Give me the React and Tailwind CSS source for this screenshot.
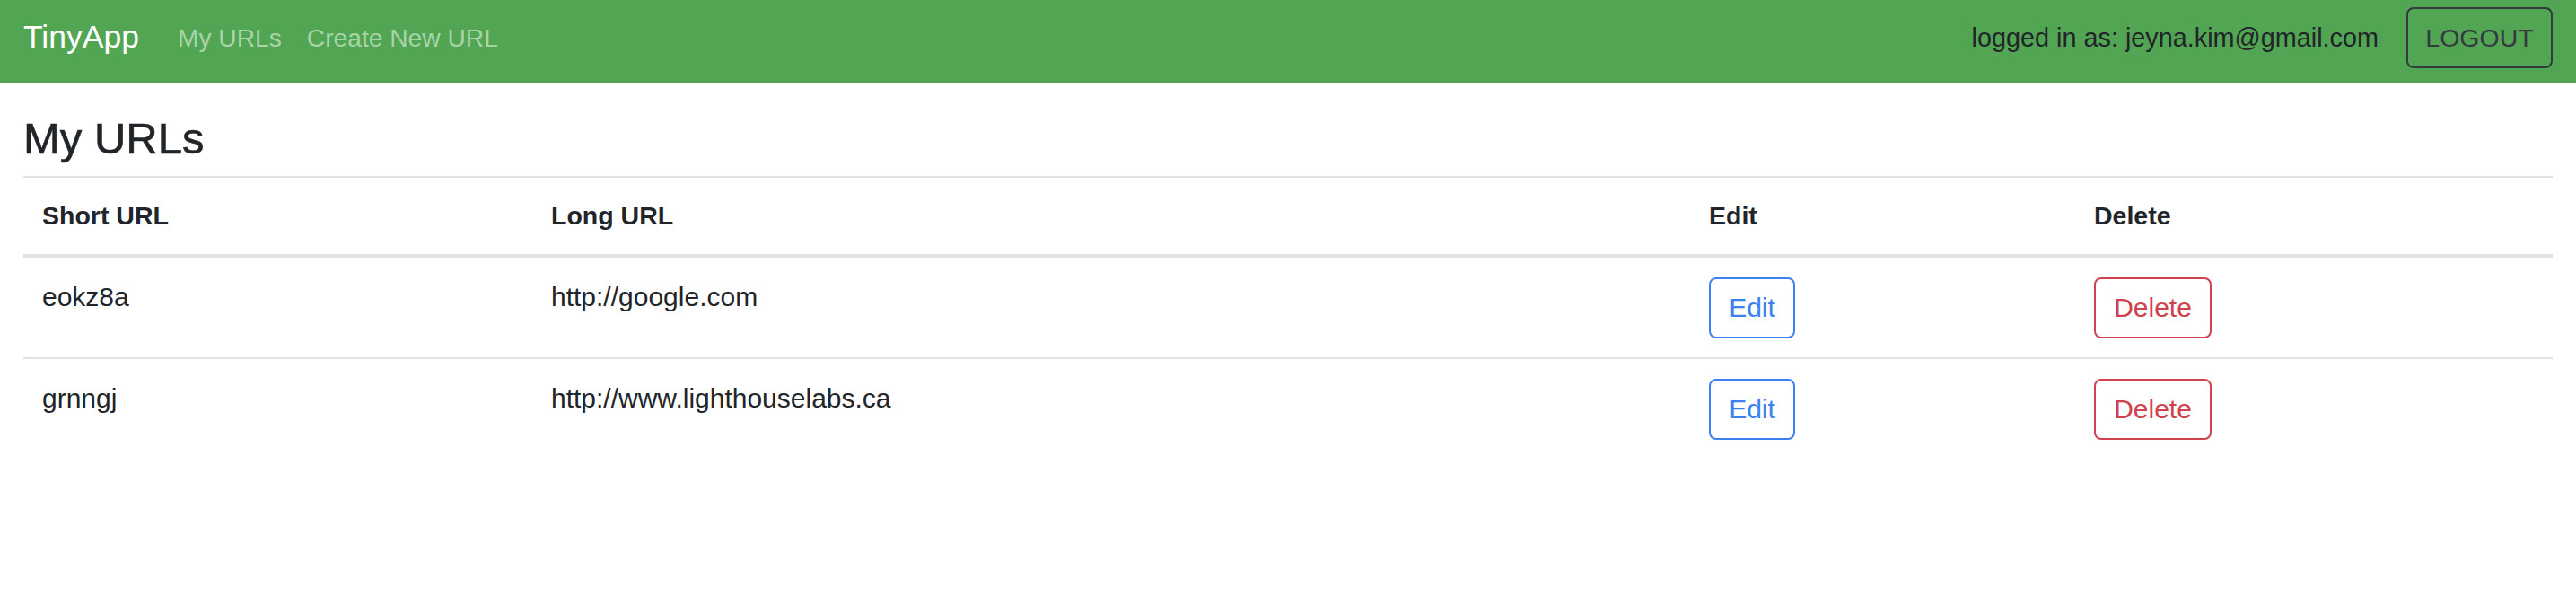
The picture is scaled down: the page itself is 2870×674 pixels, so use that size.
const urls = [
  { short: 'eokz8a', long: 'http://google.com' },
  { short: 'grnngj', long: 'http://www.lighthouselabs.ca' },
]

export default function App() {
  return (
    <div className="min-h-[674px] bg-white text-[#212529] font-['Liberation_Sans',Arial,sans-serif]">
      {/* Navbar */}
      <nav className="h-[93px] bg-[#52a552] px-[26px] pt-[8px] flex items-start">
        <div className="h-[68px] flex items-center flex-1">
          <a className="text-[35.5px] text-white mr-[29px] leading-none">TinyApp</a>
          <a className="text-[28.2px] text-[#a9d3a9] px-[14px] leading-none">My URLs</a>
          <a className="text-[28.2px] text-[#a9d3a9] px-[14px] leading-none">Create New URL</a>
        </div>
        <div className="h-[68px] flex items-center gap-[31px]">
          <span className="text-[28.8px] text-[#212529] leading-none">logged in as: jeyna.kim@gmail.com</span>
          <button className="h-[68px] w-[163px] border-2 border-[#343a40] rounded-[8px] text-[28.5px] text-[#343a40] leading-none">
            LOGOUT
          </button>
        </div>
      </nav>

      {/* Content */}
      <main className="px-[26px]">
        <h3 className="text-[49px] leading-[60px] font-medium pt-[31px] mb-[12px] [-webkit-text-stroke:0.6px_#212529]">My URLs</h3>
        <table className="w-full border-collapse table-fixed">
          <colgroup>
            <col className="w-[567px]" />
            <col className="w-[1290px]" />
            <col className="w-[429px]" />
            <col />
          </colgroup>
          <thead>
            <tr className="border-t-2 border-b-[4px] border-[#dee2e6]">
              <th className="text-left font-bold text-[28.5px] leading-[43px] px-[21px] py-[21px]">Short URL</th>
              <th className="text-left font-bold text-[28.5px] leading-[43px] px-[21px] py-[21px]">Long URL</th>
              <th className="text-left font-bold text-[28.5px] leading-[43px] px-[21px] py-[21px]">Edit</th>
              <th className="text-left font-bold text-[28.5px] leading-[43px] px-[21px] py-[21px]">Delete</th>
            </tr>
          </thead>
          <tbody>
            {urls.map((u, i) => (
              <tr key={u.short} className={i > 0 ? 'border-t-2 border-[#dee2e6]' : ''}>
                <td className="align-top text-[30px] leading-[43px] px-[21px] pt-[22px] pb-[21px]">{u.short}</td>
                <td className="align-top text-[30px] leading-[43px] px-[21px] pt-[22px] pb-[21px]">{u.long}</td>
                <td className="align-top px-[21px] pt-[22px] pb-[21px]">
                  <button className="h-[68px] w-[96px] border-2 border-[#3b82f0] rounded-[8px] text-[30px] text-[#3b82f0] leading-none">
                    Edit
                  </button>
                </td>
                <td className="align-top px-[21px] pt-[22px] pb-[21px]">
                  <button className="h-[68px] w-[131px] border-2 border-[#d0424d] rounded-[8px] text-[30px] text-[#d0424d] leading-none">
                    Delete
                  </button>
                </td>
              </tr>
            ))}
          </tbody>
        </table>
      </main>
    </div>
  )
}
